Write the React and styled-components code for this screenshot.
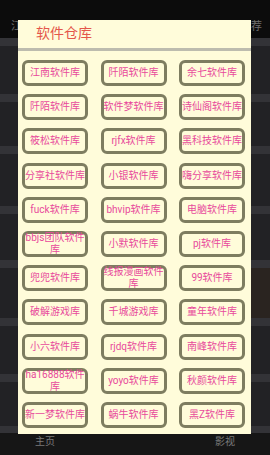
import React from "react";
import styled, { createGlobalStyle } from "styled-components";

const repos = [
  "江南软件库", "阡陌软件库", "余七软件库",
  "阡陌软件库", "软件梦软件库", "诗仙阁软件库",
  "筱松软件库", "rjfx软件库", "黑科技软件库",
  "分享社软件库", "小银软件库", "嗨分享软件库",
  "fuck软件库", "bhvip软件库", "电脑软件库",
  "bbjs团队软件库", "小默软件库", "pj软件库",
  "兜兜软件库", "线报漫画软件库", "99软件库",
  "破解游戏库", "千城游戏库", "童年软件库",
  "小六软件库", "rjdq软件库", "南峰软件库",
  "ha16888软件库", "yoyo软件库", "秋颜软件库",
  "新一梦软件库", "蜗牛软件库", "黑Z软件库",
];

const cards = [48, 44, 52, 46, 50, 48, 44];

const App = () => {
  return (
    <>
      <GlobalStyle />
      <Screen>
        <TopBar>
          <Tab>江南</Tab>
          <Tab>推荐</Tab>
        </TopBar>

        <Content>
          <CardColumn>
            {cards.map((h, i) => (
              <BgCard key={i} h={h} />
            ))}
          </CardColumn>
          <CardColumn>
            {cards.map((h, i) => (
              <BgCard key={i} h={h} warm={i === 4} />
            ))}
          </CardColumn>
        </Content>

        <BottomNav>
          <NavItem>主页</NavItem>
          <NavItem>影视</NavItem>
        </BottomNav>

        <Dialog>
          <DialogTitle>软件仓库</DialogTitle>
          <Divider />
          <RepoGrid>
            {repos.map((name, i) => (
              <RepoButton key={i}>{name}</RepoButton>
            ))}
          </RepoGrid>
        </Dialog>
      </Screen>
    </>
  );
};

export default App;

const GlobalStyle = createGlobalStyle`
  body {
    margin: 0;
    background: #0c0c0c;
    font-family: Roboto, "Noto Sans CJK SC", sans-serif;
  }
`;

const Screen = styled.div`
  width: 270px;
  height: 455px;
  position: relative;
  overflow: hidden;
  display: flex;
  flex-direction: column;
  background: #0c0c0c;
`;

const TopBar = styled.div`
  height: 38px;
  flex-shrink: 0;
  display: flex;
  justify-content: space-between;
  align-items: flex-end;
  padding: 0 8px 4px 11px;
  box-sizing: border-box;
`;

const Tab = styled.span`
  font-size: 11px;
  color: #6f6f6f;
  line-height: 14px;
`;

const Content = styled.div`
  flex: 1;
  background: #333337;
  display: flex;
  justify-content: space-between;
  padding: 8px 0 0;
  overflow: hidden;
  margin: 0 -40px;
`;

const CardColumn = styled.div`
  width: 70px;
  display: flex;
  flex-direction: column;
  gap: 8px;
`;

const BgCard = styled.div`
  height: ${(p) => p.h}px;
  flex-shrink: 0;
  border-radius: 10px;
  background: ${(p) => (p.warm ? "#2a2420" : "#222225")};
`;

const BottomNav = styled.div`
  height: 22px;
  flex-shrink: 0;
  background: #161616;
  display: flex;
  justify-content: space-between;
  align-items: flex-start;
  padding: 2px 35px 0;
  box-sizing: border-box;
`;

const NavItem = styled.span`
  font-size: 10px;
  line-height: 14px;
  color: #7a7a7a;
`;

const Dialog = styled.div`
  position: absolute;
  left: 18px;
  top: 20px;
  width: 233px;
  height: 414px;
  background: #fffcda;
  display: flex;
  flex-direction: column;
`;

const DialogTitle = styled.div`
  height: 28px;
  padding: 2px 0 0 18px;
  font-size: 14px;
  line-height: 22px;
  color: #e4564a;
  box-sizing: border-box;
`;

const Divider = styled.div`
  height: 3px;
  background: #bdbcae;
`;

const RepoGrid = styled.div`
  display: grid;
  grid-template-columns: repeat(3, 66px);
  grid-auto-rows: 26px;
  column-gap: 12.5px;
  row-gap: 8.2px;
  padding: 9px 5px 0 4px;
`;

const RepoButton = styled.div`
  box-sizing: border-box;
  border: 3px solid #7e7d60;
  border-radius: 6px;
  display: flex;
  align-items: center;
  justify-content: center;
  text-align: center;
  font-size: 10px;
  line-height: 12px;
  color: #e84a9c;
  overflow: visible;
  word-break: break-all;
`;
